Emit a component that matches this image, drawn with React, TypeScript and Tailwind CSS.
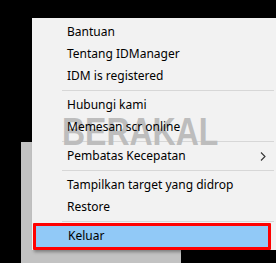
import React from "react";

type Entry = { label?: string; sep?: boolean; sub?: boolean; active?: boolean };

const entries: Entry[] = [
  { label: "Bantuan" },
  { label: "Tentang IDManager" },
  { label: "IDM is registered" },
  { sep: true },
  { label: "Hubungi kami" },
  { label: "Memesan scr online" },
  { sep: true },
  { label: "Pembatas Kecepatan", sub: true },
  { sep: true },
  { label: "Tampilkan target yang didrop" },
  { label: "Restore" },
  { sep: true },
  { label: "Keluar", active: true },
];

export default function App() {
  return (
    <div
      className="relative w-[276px] h-[263px] overflow-hidden bg-black"
      style={{ fontFamily: '"Noto Sans", "Open Sans", sans-serif' }}
    >
      {/* window behind the menu */}
      <div className="absolute left-[21px] top-[142px] w-[160px] h-[130px] bg-[#c2c2c2]" />

      <div className="absolute left-[32px] top-[18px] w-[246px] h-[232px] bg-[#f2f2f2] shadow-[2px_2px_3px_rgba(0,0,0,0.35)] py-[3px]">
        {/* watermark */}
        <div
          className="absolute left-[30px] top-[94px] text-[39px] font-bold leading-none text-[#bdbdbd] origin-left scale-x-[0.82]"
          style={{ fontFamily: '"Liberation Sans", Arial, sans-serif' }}
        >
          BERAKAL
        </div>
        {entries.map((e, i) =>
          e.sep ? (
            <div key={i} className="h-[7px] flex items-center pl-[30px] pr-[4px]">
              <div className="h-px w-full bg-[#d7d7d7]" />
            </div>
          ) : (
            <div
              key={i}
              className={`relative h-[22px] flex items-center pl-[35px] text-[12px] text-black ${
                e.active ? "ml-[1px] w-[238px] pl-[34px] bg-[#91c9f7]" : ""
              }`}
            >
              <span className="relative">{e.label}</span>
              {e.sub && (
                <svg className="absolute left-[228px] top-[7px]" width="6" height="9" viewBox="0 0 6 9">
                  <path d="M1 0.5 L5 4.5 L1 8.5" fill="none" stroke="#333" strokeWidth="1.1" />
                </svg>
              )}
              {e.active && (
                <div className="absolute left-0 right-0 -top-[2px] -bottom-[3px] border-[3px] border-[#ff0000] rounded-[1px]" />
              )}
            </div>
          )
        )}
      </div>
    </div>
  );
}
